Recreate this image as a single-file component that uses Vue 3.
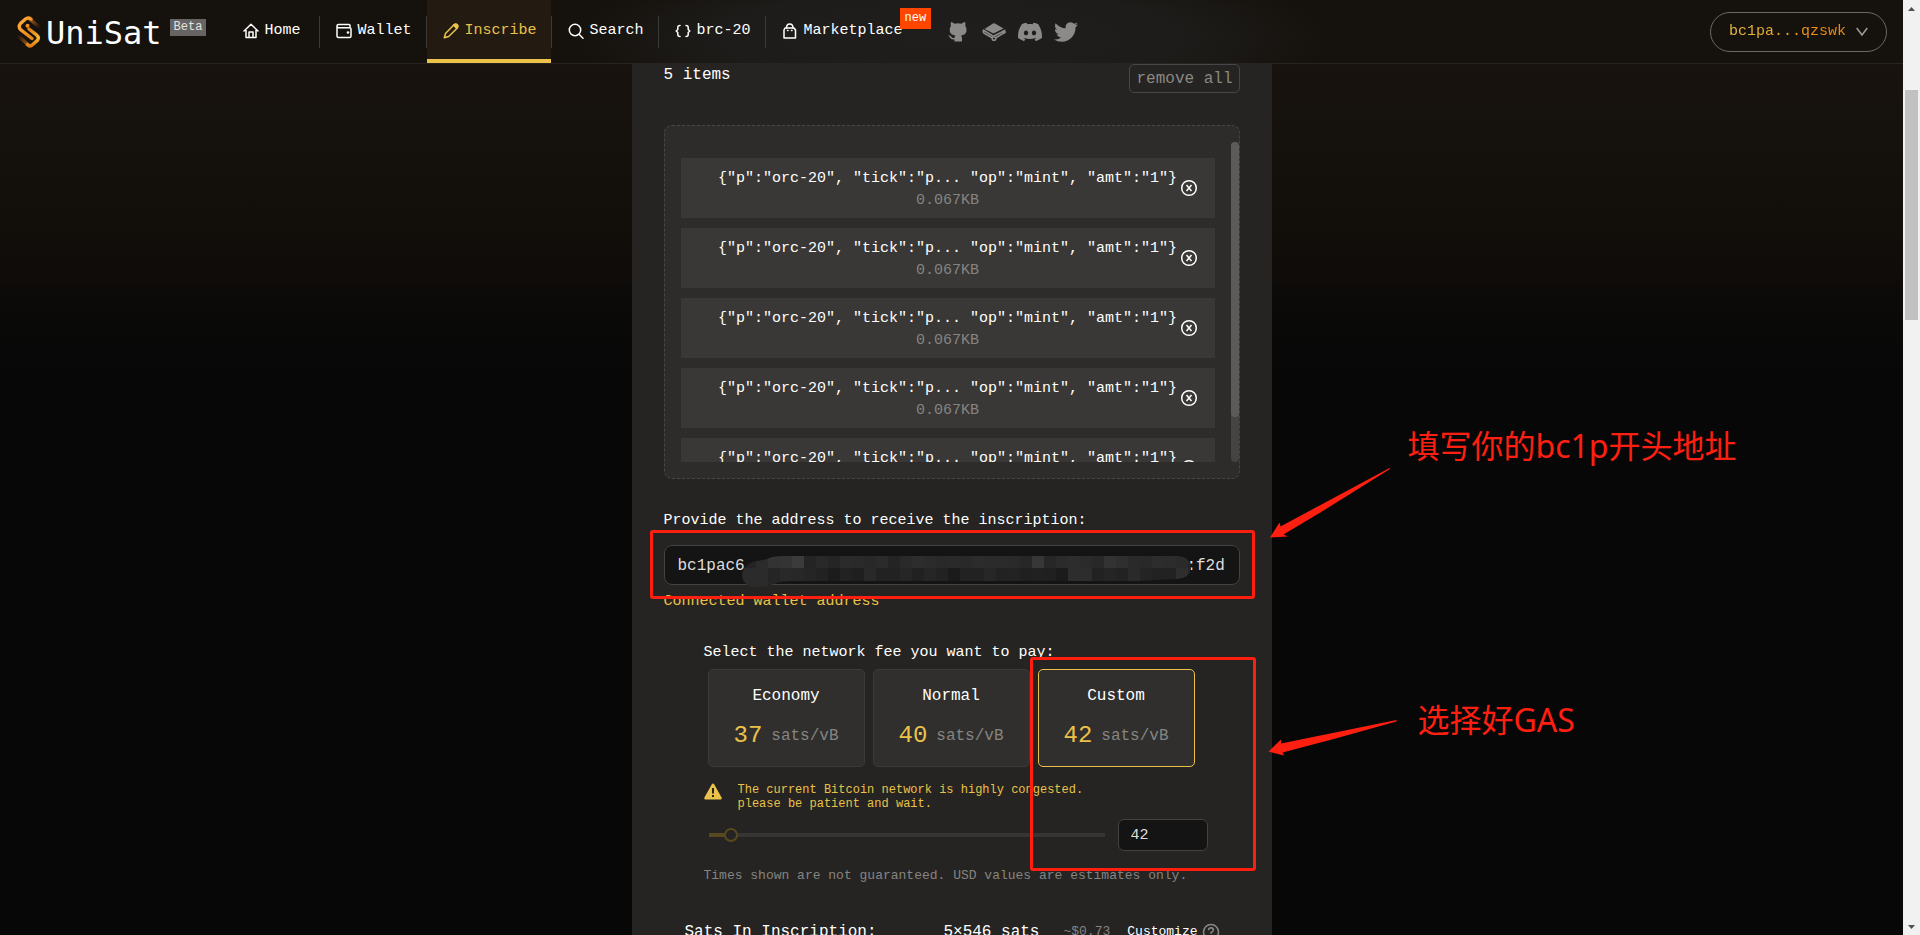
<script setup>
import { ref } from 'vue'

const navItems = [
  { label: 'Home', icon: 'home' },
  { label: 'Wallet', icon: 'wallet' },
  { label: 'Inscribe', icon: 'pen', active: true },
  { label: 'Search', icon: 'search' },
  { label: 'brc-20', icon: 'braces' },
  { label: 'Marketplace', icon: 'bag', badge: 'new' },
]

const items = Array.from({ length: 5 }, (_, id) => ({
  id,
  text: '{"p":"orc-20", "tick":"p... "op":"mint", "amt":"1"}',
  size: '0.067KB',
}))

const fees = [
  { name: 'Economy', rate: 37 },
  { name: 'Normal', rate: 40 },
  { name: 'Custom', rate: 42 },
]
const selectedFee = ref('Custom')
const customRate = ref(42)
const address = ref('bc1pac6' + '\u00a0'.repeat(46) + ':f2d')

const mosaicRows = [
  '242424 2b2b2b 333333 343434 3b3b3b 242424 292929 252525 2b2b2b 2a2a2a 282828 2b2b2b 242424 2a2a2a 2d2d2d 2b2b2b 292929 2a2a2a 292929 2c2c2c 2b2b2b 2b2b2b 2a2a2a 272727 373737 272727 2b2b2b 2d2d2d 2b2b2b 282828 333333 2f2f2f 2a2a2a 292929 2d2d2d 2c2c2c 2a2a2a 252525'.split(' '),
  '2b2b2b 2b2b2b 252525 292929 282828 252525 222222 1c1c1c 222222 1f1f1f 292929 222222 222222 262626 212121 262626 222222 1b1b1b 222222 222222 272727 222222 232323 202020 212121 202020 1b1b1b 2d2d2d 2d2d2d 222222 252525 222222 2a2a2a 242424 222222 222222 2e2e2e 272727'.split(' '),
]
</script>

<template>
  <div class="page">
    <div class="main">
      <header class="header">
        <a class="logo" href="#">
          <svg width="24" height="32" viewBox="0 0 24 32" fill="none" stroke-linecap="round">
            <defs>
              <linearGradient id="tailTop" x1="0" y1="0" x2="1" y2="1">
                <stop offset="0" stop-color="#b5651c" />
                <stop offset="1" stop-color="#2a170c" />
              </linearGradient>
              <linearGradient id="tailBottom" x1="1" y1="1" x2="0" y2="0">
                <stop offset="0" stop-color="#b5651c" />
                <stop offset="1" stop-color="#2a170c" />
              </linearGradient>
              <linearGradient id="sUp" x1="0" y1="0" x2="1" y2="1">
                <stop offset="0" stop-color="#ffab3d" />
                <stop offset="1" stop-color="#e98412" />
              </linearGradient>
              <linearGradient id="sDown" x1="0" y1="0" x2="0" y2="1">
                <stop offset="0" stop-color="#e07d13" />
                <stop offset=".5" stop-color="#f7b92f" />
                <stop offset="1" stop-color="#e07d13" />
              </linearGradient>
            </defs>
            <path d="M12 2.500 L21.500 10.500" stroke="url(#tailTop)" stroke-width="3.500" />
            <path d="M12 29.500 L2 20.500" stroke="url(#tailBottom)" stroke-width="3.500" />
            <path d="M14 3 Q11 .8 8.500 3 L3.500 7.500 Q1 10.500 3.500 13.500 L15 22.500" stroke="url(#sUp)" stroke-width="3.400" />
            <path d="M12 13 L19.500 18.800 Q22.500 21.500 20.500 24.300 L15.500 28.800 Q13 31 10.500 28.800" stroke="url(#sDown)" stroke-width="3.400" />
            <circle cx="10.500" cy="9.800" r="2" fill="#f58d16" />
          </svg>
          <span class="logo-name">UniSat</span>
          <span class="beta">Beta</span>
        </a>

        <nav class="nav">
          <a v-for="item in navItems" :key="item.label" href="#" class="nav-item" :class="{ active: item.active }">
            <svg class="nav-icon" width="16" height="16" viewBox="0 0 16 16" fill="none" stroke="currentColor" stroke-width="1.500" stroke-linecap="round" stroke-linejoin="round">
              <template v-if="item.icon === 'home'">
                <path d="M1 8 L8 1.300 L15 8 M3 7 V14.500 H13 V7" />
                <path d="M6 14 V9 H10 V14" />
              </template>
              <template v-else-if="item.icon === 'wallet'">
                <path d="M14 4.500 V2.500 Q14 1.500 13 1.500 H2.500 Q1 1.500 1 3 Q1 4.700 2.500 4.700 H13.500 Q15 4.700 15 6 V13 Q15 14.500 13.500 14.500 H2.500 Q1 14.500 1 13 V3" />
                <circle cx="12" cy="9.500" r=".6" fill="currentColor" />
              </template>
              <template v-else-if="item.icon === 'pen'">
                <path d="M1.300 14.800 L2.500 10.500 L10.500 2.200 Q12.500 .2 14.300 1.800 Q15.700 3.500 13.800 5.500 L5.700 13.500 Z" />
                <path d="M10.500 2.200 L13.800 5.500 L14.800 3 L13 1.200 Z" fill="currentColor" />
              </template>
              <template v-else-if="item.icon === 'search'">
                <circle cx="7" cy="7" r="5.700" />
                <path d="M11.300 11.500 L15 15.200" />
              </template>
              <template v-else-if="item.icon === 'braces'">
                <path d="M5 2.500 Q2.800 2.500 2.800 4.500 V6.500 L1.200 8 L2.800 9.500 V11.500 Q2.800 13.500 5 13.500 M11 2.500 Q13.200 2.500 13.200 4.500 V6.500 L14.800 8 L13.200 9.500 V11.500 Q13.200 13.500 11 13.500" />
              </template>
              <template v-else>
                <path d="M3 5 H12 L13.500 7 V15 H2 V7 Z" />
                <path d="M4.500 5 Q4.500 1 7.700 1 Q11 1 11 5 M5.500 7.500 H6 M9.500 7.500 H10" />
              </template>
            </svg>
            <span>{{ item.label }}</span>
            <span v-if="item.badge" class="new-badge">{{ item.badge }}</span>
          </a>
        </nav>

        <div class="socials">
          <a href="#" aria-label="GitHub">
            <svg width="24" height="24" viewBox="0 0 24 24" fill="currentColor">
              <path d="M5 2 Q6 1.700 8.500 3.700 Q12 3 15.500 3.700 Q18 1.700 19 2 Q19.800 4 19.300 6 Q21 8 20.500 11 Q19.800 15 15 15.500 Q16 16.500 16 18 V21.500 H8.500 V19.500 Q5 20 4 17.500 Q3.500 16.500 2 15.700 Q4.300 15.200 5.500 17 Q6.500 18.500 8.500 17.800 Q8.500 16.200 9.500 15.500 Q4.500 15 3.700 11 Q3.300 8 4.900 6 Q4.300 4 5 2 Z" />
            </svg>
          </a>
          <a href="#" aria-label="GitBook">
            <svg width="24" height="24" viewBox="0 0 24 24" fill="none" stroke="currentColor">
              <path d="M11 3.500 Q12 3 13 3.500 L21.500 8.500 L11.500 13.500 L2.500 9 Z" fill="currentColor" stroke="none" />
              <path d="M1.800 9.500 Q.5 12 2.300 13.300 L10.500 18 M2 10.500 L10.500 15.800 Q11.500 16.300 12.500 15.800 L22.500 10.500 V12.500 L13.500 18" stroke-width="1.600" />
              <circle cx="12" cy="18.500" r="1.800" stroke-width="1.500" />
              <circle cx="22" cy="12" r="1.300" fill="currentColor" />
            </svg>
          </a>
          <a href="#" aria-label="Discord">
            <svg width="24" height="24" viewBox="0 0 24 24" fill="currentColor">
              <path d="M20.317 4.3698a19.7913 19.7913 0 00-4.8851-1.5152.0741.0741 0 00-.0785.0371c-.211.3753-.4447.8648-.6083 1.2495-1.8447-.2762-3.68-.2762-5.4868 0-.1636-.3933-.4058-.8742-.6177-1.2495a.077.077 0 00-.0785-.037 19.7363 19.7363 0 00-4.8852 1.515.0699.0699 0 00-.0321.0277C.5334 9.0458-.319 13.5799.0992 18.0578a.0824.0824 0 00.0312.0561c2.0528 1.5076 4.0413 2.4228 5.9929 3.0294a.0777.0777 0 00.0842-.0276c.4616-.6304.8731-1.2952 1.226-1.9942a.076.076 0 00-.0416-.1057c-.6528-.2476-1.2743-.5495-1.8722-.8923a.077.077 0 01-.0076-.1277c.1258-.0943.2517-.1923.3718-.2914a.0743.0743 0 01.0776-.0105c3.9278 1.7933 8.18 1.7933 12.0614 0a.0739.0739 0 01.0785.0095c.1202.099.246.1981.3728.2924a.077.077 0 01-.0066.1276 12.2986 12.2986 0 01-1.873.8914.0766.0766 0 00-.0407.1067c.3604.698.7719 1.3628 1.225 1.9932a.076.076 0 00.0842.0286c1.961-.6067 3.9495-1.5219 6.0023-3.0294a.077.077 0 00.0313-.0552c.5004-5.177-.8382-9.6739-3.5485-13.6604a.061.061 0 00-.0312-.0286zM8.02 15.3312c-1.1825 0-2.1569-1.0857-2.1569-2.419 0-1.3332.9555-2.4189 2.157-2.4189 1.2108 0 2.1757 1.0952 2.1568 2.419 0 1.3332-.9555 2.4189-2.1569 2.4189zm7.9748 0c-1.1825 0-2.1569-1.0857-2.1569-2.419 0-1.3332.9554-2.4189 2.1569-2.4189 1.2108 0 2.1757 1.0952 2.1568 2.419 0 1.3332-.946 2.4189-2.1568 2.4189Z" />
            </svg>
          </a>
          <a href="#" aria-label="Twitter">
            <svg width="24" height="24" viewBox="0 0 24 24" fill="currentColor">
              <path d="M23.953 4.570a10 10 0 01-2.825.775 4.958 4.958 0 002.163-2.723c-.951.555-2.005.959-3.127 1.184a4.920 4.920 0 00-8.384 4.482C7.690 8.095 4.067 6.130 1.640 3.162a4.822 4.822 0 00-.666 2.475c0 1.710.870 3.213 2.188 4.096a4.904 4.904 0 01-2.228-.616v.060a4.923 4.923 0 003.946 4.827 4.996 4.996 0 01-2.212.085 4.936 4.936 0 004.604 3.417 9.867 9.867 0 01-6.102 2.105c-.390 0-.779-.023-1.170-.067a13.995 13.995 0 007.557 2.209c9.053 0 13.998-7.496 13.998-13.985 0-.210 0-.420-.015-.630A9.935 9.935 0 0024 4.590z" />
            </svg>
          </a>
        </div>

        <button class="account" type="button">
          <span class="account-name">bc1pa...qzswk</span>
          <svg width="12" height="10" viewBox="0 0 12 10" fill="none" stroke="#a09e9b" stroke-width="1.500">
            <path d="M.7 1 L6 8 L11.300 1" />
          </svg>
        </button>
      </header>

      <main class="panel">
        <div class="items-head">
          <span class="items-count">5 items</span>
          <button class="remove" type="button">remove all</button>
        </div>

        <section class="list-box">
          <ul class="list">
            <li v-for="item in items" :key="item.id" class="list-item">
              <span class="item-text">{{ item.text }}</span>
              <span class="item-size">{{ item.size }}</span>
              <button class="item-remove" type="button" aria-label="Remove">
                <svg width="18" height="18" viewBox="0 0 18 18" fill="none" stroke="#fff" stroke-width="1.500">
                  <circle cx="9" cy="9" r="7.300" />
                  <path d="M6.500 6 L11.500 12 M11.500 6 L6.500 12" />
                </svg>
              </button>
            </li>
          </ul>
          <div class="list-track"><div class="list-thumb"></div></div>
        </section>

        <label class="field-label" for="address">Provide the address to receive the inscription:</label>
        <div class="address">
          <input id="address" v-model="address" type="text" />
          <svg class="mosaic" width="454" height="34" viewBox="0 0 454 34">
            <defs>
              <clipPath id="smudge">
                <path d="M0 21 Q1 9 14 6 Q24 5 30 2 Q35 1 42 1 H436 Q449 2 449 14 Q447 23 436 24 L396 26 H50 Q38 26 32 29 Q24 32 14 32 Q2 32 0 21 Z" />
              </clipPath>
            </defs>
            <g clip-path="url(#smudge)">
              <template v-for="(row, r) in mosaicRows" :key="r">
                <rect v-for="(c, i) in row" :key="i" :x="i * 12 + 2 - (i ? 0 : 2)" :y="r * 12 + 1" :width="i ? 12 : 14" :height="r ? 20 : 12" :fill="'#' + c" />
              </template>
            </g>
          </svg>
          <div class="mark mark-address"></div>
        </div>
        <a class="connected" href="#">Connected wallet address</a>

        <section class="fees">
          <h2 class="fees-title">Select the network fee you want to pay:</h2>
          <div class="fee-cards">
            <button v-for="fee in fees" :key="fee.name" type="button" class="fee" :class="{ selected: fee.name === selectedFee }" @click="selectedFee = fee.name">
              <span class="fee-name">{{ fee.name }}</span>
              <span class="fee-rate"><b>{{ fee.rate }}</b><span>sats/vB</span></span>
            </button>
          </div>
          <div class="warning">
            <svg width="18" height="17" viewBox="0 0 18 17">
              <path d="M9 .5 Q9.800 .5 10.300 1.500 L17.700 14.800 Q18 16.500 16.800 16.500 H1.200 Q0 16.500 .3 14.800 L7.700 1.500 Q8.200 .5 9 .5 Z" fill="#eac249" />
              <path d="M9 5 V10.500 M9 12 V14" stroke="#252422" stroke-width="2" />
            </svg>
            <p>The current Bitcoin network is highly congested.<br />please be patient and wait.</p>
          </div>
          <div class="slider-row">
            <input v-model="customRate" class="slider" type="range" min="37" max="162" aria-label="Custom fee rate" />
            <input v-model="customRate" class="rate-input" type="text" aria-label="Fee rate" />
          </div>
          <p class="note">Times shown are not guaranteed. USD values are estimates only.</p>
          <div class="mark mark-fee"></div>
        </section>

        <div class="sats">
          <span class="sats-label">Sats In Inscription:</span>
          <span class="sats-value">5×546 sats</span>
          <span class="sats-usd">~$0.73</span>
          <a class="sats-custom" href="#">Customize</a>
          <svg width="18" height="18" viewBox="0 0 18 18" fill="none" stroke="#8a8986" stroke-width="1.500">
            <circle cx="9" cy="9" r="7.500" />
            <path d="M6.500 7.200 Q6.700 4.800 9 4.800 Q11.500 5 11.400 7 Q11.300 8.300 9 9.500 V10.800 M9 12.200 V13.600" />
          </svg>
        </div>

        <svg class="arrows" width="132" height="294" viewBox="0 0 132 294" fill="#ff1f10">
          <path d="M121.500 5 L12.500 63.500 L11.500 59.500 L2 74.500 L20 73.500 L15.500 71.500 L54 48.500 L122 6 Z" />
          <path d="M128.500 257 L13 280.500 V276.500 L.5 288.500 L16 292.500 L14.500 289.500 L62 277 L128.500 258.500 Z" />
        </svg>
        <p class="hint hint-address">填写你的bc1p开头地址</p>
        <p class="hint hint-gas">选择好GAS</p>
      </main>
    </div>

    <div class="page-scroll">
      <svg width="17" height="17" viewBox="0 0 17 17" fill="#505050"><path d="M5 11 L8.500 7 L12 11 Z" /></svg>
      <div class="page-track"><div class="page-thumb"></div></div>
      <svg width="17" height="17" viewBox="0 0 17 17" fill="#505050"><path d="M5 7 L8.500 11 L12 7 Z" /></svg>
    </div>
  </div>
</template>

<style>
body {
  margin: 0;
  background: #070707;
}
</style>

<style scoped>
.page {
  display: flex;
  height: 100vh;
  overflow: hidden;
  color: #fff;
  font-family: "Liberation Mono", "Noto Sans CJK SC", monospace;
  font-size: 15px;
  line-height: 20px;
}
.page * {
  box-sizing: border-box;
}
.page p,
.page h2,
.page ul {
  margin: 0;
  padding: 0;
  font-weight: 400;
}
button,
input {
  font: inherit;
  color: inherit;
  margin: 0;
}
button {
  cursor: pointer;
  background: none;
  border: 0;
  padding: 0;
}
a {
  color: inherit;
  text-decoration: none;
}
.main {
  flex: 1;
  min-width: 0;
  overflow: hidden;
  background: linear-gradient(#1a140f 0, #15110c 140px, #100c09 270px, #0b0a09 300px, #070707 380px);
}

/* Header */
.header {
  display: flex;
  align-items: center;
  height: 64px;
  padding: 0 16px 0 17px;
  border-bottom: 1px solid #262321;
  background:
    radial-gradient(ellipse 380px 80px at 50% 60%, #1f1e1c 0, #1e1c1a 60%, transparent 100%),
    #15120d;
}
.logo {
  display: flex;
  align-items: center;
  gap: 5px;
}
.logo-name {
  padding-top: 2px;
  font-size: 32px;
  line-height: 40px;
  font-family: "DejaVu Sans Mono", monospace;
}
.beta {
  align-self: flex-start;
  height: 17px;
  padding: 0 4px;
  margin: 8px 0 0 3px;
  background: #666564;
  color: #e4e3e2;
  font-size: 12px;
  line-height: 17px;
}
.nav {
  display: flex;
  align-self: stretch;
  margin-left: 21px;
}
.nav-item {
  position: relative;
  display: flex;
  align-items: center;
  gap: 5px;
  padding: 3px 15px 0 16px;
  border-bottom: 4px solid transparent;
  line-height: 20px;
}
.nav-item:first-child {
  padding-right: 19px;
}
.nav-item + .nav-item {
  margin-left: 1px;
}
.nav-item + .nav-item::before {
  content: "";
  position: absolute;
  left: -1px;
  top: 16px;
  width: 1px;
  height: 32px;
  background: #3c3a37;
}
.nav-item.active {
  color: #eac249;
  background: #231b12;
  border-bottom-color: #eac249;
}
.new-badge {
  position: absolute;
  left: calc(100% - 18px);
  top: 8px;
  height: 21px;
  padding: 0 5px;
  background: #ff4500;
  font-size: 12px;
  line-height: 21px;
}
.socials {
  display: flex;
  gap: 12px;
  margin-left: 28px;
  color: #8b8a88;
}
.socials a,
.socials svg {
  display: block;
}
.account {
  display: flex;
  align-items: center;
  gap: 10px;
  height: 40px;
  margin-left: auto;
  padding: 0 18px;
  border: 1px solid #6a6865;
  border-radius: 20px;
}
.account-name {
  background: linear-gradient(90deg, #eac249, #f08a14 80%);
  background-clip: text;
  color: transparent;
}

/* Panel */
.panel {
  position: relative;
  width: 640px;
  max-width: 100%;
  min-height: 100vh;
  margin: 0 auto;
  padding: 0 32px;
  background: #252422;
}
.items-head {
  display: flex;
  justify-content: space-between;
  align-items: flex-start;
  font-size: 16px;
}
.items-count {
  padding-top: 1px;
}
.remove {
  height: 29px;
  padding: 0 6px;
  border: 1px solid #484745;
  border-radius: 5px;
  color: #8a8986;
}
.list-box {
  position: relative;
  display: flex;
  height: 354px;
  margin-top: 32px;
  padding: 16px 0;
  border: 1px dashed #484745;
  border-radius: 8px;
  background: #2d2c2a;
}
.list {
  flex: 1;
  display: flex;
  flex-direction: column;
  gap: 10px;
  overflow: hidden;
  list-style: none;
}
.page .list {
  padding: 16px 16px 0 16px;
}
.list-item {
  position: relative;
  flex: none;
  display: flex;
  flex-direction: column;
  align-items: center;
  gap: 2px;
  height: 60px;
  padding-top: 11px;
  background: #393836;
}
.item-size {
  color: #858482;
}
.item-remove {
  position: absolute;
  right: 17px;
  top: 21px;
  width: 18px;
  height: 18px;
}
.item-remove svg {
  display: block;
}
.list-track {
  width: 8px;
  border-radius: 4px;
  background: #454443;
}
.list-thumb {
  height: 275px;
  border-radius: 4px;
  background: #5c5b5a;
}
.field-label {
  display: block;
  margin-top: 32px;
}
.address {
  position: relative;
  margin-top: 14px;
}
.address input {
  display: block;
  width: 100%;
  height: 40px;
  padding: 2px 12px 0 13px;
  border: 1px solid #434240;
  border-radius: 8px;
  background: #141414;
  color: #dededd;
  font-size: 16px;
}
.mosaic {
  position: absolute;
  left: 78px;
  top: 10px;
}
.mark {
  position: absolute;
  border: 3px solid #ff1f10;
  border-radius: 3px;
  pointer-events: none;
}
.mark-address {
  inset: -15px -15px -14px -14px;
}
.connected {
  display: block;
  margin-top: 7px;
  color: #eac249;
}
.fees {
  position: relative;
  margin: 31px 32px 0 40px;
}
.page .fees-title {
  font-size: 15px;
  line-height: 20px;
}
.fee-cards {
  display: flex;
  gap: 8px;
  margin: 6px 13px 0 4px;
}
.fee {
  flex: 1;
  display: flex;
  flex-direction: column;
  align-items: center;
  gap: 16px;
  height: 98px;
  padding-top: 16px;
  border: 1px solid #3b3a38;
  border-radius: 5px;
  background: #302f2d;
  font-size: 16px;
}
.fee.selected {
  border-color: #eac249;
}
.fee-rate {
  display: flex;
  align-items: center;
  gap: 9px;
  line-height: 28px;
  color: #858482;
}
.fee-rate b {
  color: #eac249;
  font-size: 24px;
  font-weight: 400;
}
.warning {
  display: flex;
  gap: 16px;
  margin-top: 16px;
  color: #eac249;
  font-size: 12px;
  line-height: 14px;
}
.slider-row {
  display: flex;
  align-items: center;
  gap: 13px;
  margin: 8px 0 0 5px;
}
.slider {
  flex: 1;
  min-width: 0;
  height: 14px;
  appearance: none;
  background: linear-gradient(90deg, #57491f 20px, #363533 20px) center / 100% 4px no-repeat;
}
.slider::-webkit-slider-thumb {
  appearance: none;
  width: 14px;
  height: 14px;
  border: 2px solid #57491f;
  border-radius: 50%;
  background: #252422;
}
.rate-input {
  width: 90px;
  height: 32px;
  padding: 0 12px;
  border: 1px solid #434240;
  border-radius: 6px;
  background: #141414;
  color: #dededd;
}
.page .note {
  margin-top: 15px;
  color: #858482;
  font-size: 13px;
}
.mark-fee {
  inset: 14px -48px 15px 326px;
}
.sats {
  display: flex;
  align-items: center;
  margin: 36px 20px 0 21px;
  white-space: nowrap;
  font-size: 16px;
}
.sats-label {
  flex: 1;
  max-width: 259px;
}
.sats-usd {
  margin-left: 24px;
  color: #858482;
  font-size: 13px;
}
.sats-custom {
  margin: 0 4px 0 17px;
  font-size: 13px;
}

/* Callouts drawn over the page */
.arrows {
  position: absolute;
  left: 636px;
  top: 399px;
}
.hint {
  position: absolute;
  left: 776px;
  white-space: nowrap;
  color: #ff1f10;
  font-family: "Noto Sans", "Noto Sans CJK SC", sans-serif;
  font-size: 32px;
  line-height: 44px;
}
.hint-address {
  top: 360px;
}
.hint-gas {
  left: 786px;
  top: 634px;
}

/* Browser scrollbar */
.page-scroll {
  display: flex;
  flex-direction: column;
  width: 17px;
  background: #f1f1f1;
}
.page-scroll svg {
  display: block;
}
.page-track {
  flex: 1;
  padding: 73px 2px 0;
}
.page-thumb {
  height: 230px;
  background: #c1c1c1;
}
</style>
